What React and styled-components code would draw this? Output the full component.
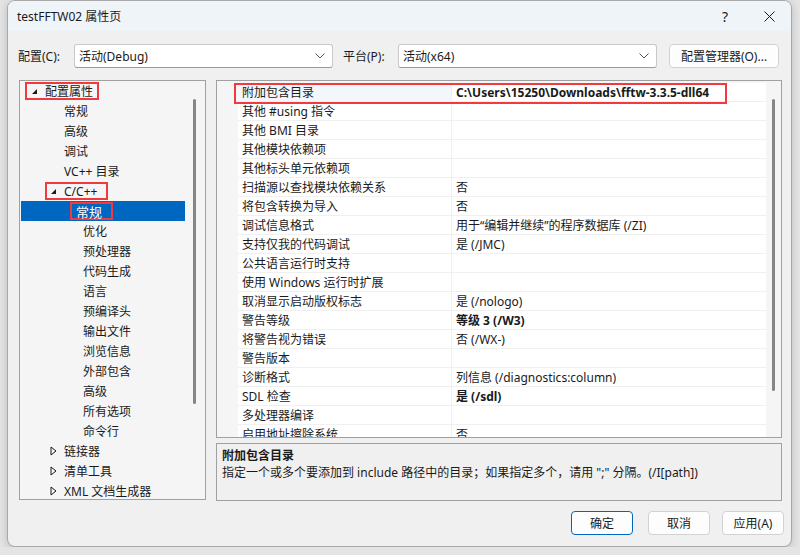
import React from "react";
import styled, { createGlobalStyle } from "styled-components";

const GlobalStyle = createGlobalStyle`
  html, body {
    margin: 0;
    padding: 0;
    background: #e4e4e4;
    font-family: "Noto Sans", "Noto Sans CJK SC", sans-serif;
    font-size: 12px;
    color: #1a1a1a;
  }
`;

const FONT = `"Noto Sans", "Noto Sans CJK SC", sans-serif`;

const Dialog = styled.div`
  margin-left: 7px;
  width: 785px;
  height: 547px;
  box-sizing: border-box;
  border: 1px solid #a8a8a8;
  border-radius: 8px;
  background: #f0f0f0;
  overflow: hidden;
  display: flex;
  flex-direction: column;
  box-shadow: 0 2px 8px rgba(0, 0, 0, 0.18);
`;

const TitleBar = styled.div`
  height: 30px;
  background: #eff4f9;
  display: flex;
  align-items: center;
  padding-left: 9px;
  font-size: 12px;
  flex-shrink: 0;
`;

const TitleText = styled.div`
  flex: 1;
`;

const TitleButton = styled.div`
  width: 44px;
  height: 30px;
  display: flex;
  align-items: center;
  justify-content: center;
  font-size: 14px;
`;

const Toolbar = styled.div`
  display: flex;
  align-items: center;
  height: 25px;
  margin-top: 12px;
  padding-left: 10px;
`;

const Label = styled.span`
  width: ${(p) => p.$w}px;
  white-space: nowrap;
`;

const Combo = styled.div`
  width: 259px;
  height: 24px;
  box-sizing: border-box;
  background: #fff;
  border: 1px solid #c9c9c9;
  border-bottom-color: #9a9a9a;
  border-radius: 3px;
  display: flex;
  align-items: center;
  padding: 0 7px 0 4px;
  margin-right: ${(p) => p.$mr}px;
  span {
    flex: 1;
  }
`;

const Button = styled.button`
  font-family: ${FONT};
  font-size: 12px;
  color: #1a1a1a;
  height: 24px;
  width: ${(p) => p.$w}px;
  margin-left: ${(p) => p.$ml || 0}px;
  background: #fdfdfd;
  border: 1px solid ${(p) => (p.$primary ? "#0067c0" : "#d2d2d2")};
  box-shadow: ${(p) => (p.$primary ? "inset 0 0 0 1px #ffffff" : "none")};
  border-radius: 4px;
  padding: 0;
`;

const Main = styled.div`
  display: flex;
  gap: 10px;
  margin-top: 12px;
  padding-left: 11px;
  height: 421px;
`;

const TreePanel = styled.div`
  position: relative;
  width: 187px;
  height: 420px;
  box-sizing: border-box;
  border: 1px solid #a0a0a0;
  background: #f5f5f5;
  overflow: hidden;
`;

const Thumb = styled.div`
  position: absolute;
  left: ${(p) => p.$x}px;
  top: ${(p) => p.$top}px;
  width: 3px;
  height: ${(p) => p.$h}px;
  border-radius: 2px;
  background: #858585;
`;

const TreeRow = styled.div`
  height: 20px;
  width: 164px;
  margin-left: 1px;
  display: flex;
  align-items: center;
  padding-left: ${(p) => p.$indent}px;
  box-sizing: border-box;
  background: ${(p) => (p.$selected ? "#0067c0" : "transparent")};
  color: ${(p) => (p.$selected ? "#fff" : "#1a1a1a")};
  font-size: ${(p) => (p.$selected ? 13 : 12)}px;
  white-space: nowrap;
`;

const Arrow = styled.span`
  width: 14px;
  display: inline-flex;
  align-items: center;
`;

const Marked = styled.span`
  display: inline-flex;
  align-items: center;
  height: 18px;
  box-sizing: border-box;
  border: 2px solid #f03a3f;
  padding: 0 ${(p) => p.$pr}px 0 ${(p) => p.$pl}px;
  margin-left: ${(p) => -p.$pl - 2}px;
`;

const RightCol = styled.div`
  width: 566px;
  display: flex;
  flex-direction: column;
  gap: 5px;
`;

const Grid = styled.div`
  position: relative;
  height: 358px;
  box-sizing: border-box;
  border: 1px solid #a0a0a0;
  background: #f5f5f5;
  padding-top: 2px;
  overflow: hidden;
`;

const GridRow = styled.div`
  display: grid;
  grid-template-columns: 21px 214px 314px;
  height: 19px;
`;

const Cell = styled.div`
  box-sizing: border-box;
  height: 19px;
  display: flex;
  align-items: center;
  padding-left: 4px;
  background: ${(p) => p.$bg || "#fff"};
  border-bottom: 1px solid #f0f0f0;
  border-right: ${(p) => (p.$sep ? "1px solid #f0f0f0" : "none")};
  font-weight: ${(p) => (p.$bold ? 700 : 400)};
  white-space: nowrap;
  overflow: hidden;
`;

const Gutter = styled.div`
  background: #f5f5f5;
`;

const RedFrame = styled.div`
  position: absolute;
  left: 17px;
  top: 2px;
  width: 493px;
  height: 21px;
  box-sizing: border-box;
  border: 2px solid #f03a3f;
  pointer-events: none;
`;

const Desc = styled.div`
  height: 58px;
  box-sizing: border-box;
  border: 1px solid #a0a0a0;
  background: #f0f0f0;
  padding: 3px 5px;
  line-height: 17px;
`;

const DescTitle = styled.div`
  font-weight: 700;
`;

const Footer = styled.div`
  display: flex;
  justify-content: flex-end;
  padding-right: 7px;
  margin-top: 10px;
`;

const Chevron = () => (
  <svg width="10" height="6" viewBox="0 0 10 6">
    <path d="M0.5 0.5 L5 5 L9.5 0.5" fill="none" stroke="#555" strokeWidth="1" />
  </svg>
);

const Expanded = () => (
  <svg width="7" height="7" viewBox="0 0 7 7">
    <path d="M6 1 L6 6 L1 6 Z" fill="#1a1a1a" />
  </svg>
);

const Collapsed = () => (
  <svg width="7" height="10" viewBox="0 0 7 10">
    <path d="M1 1 L6 5 L1 9 Z" fill="none" stroke="#1a1a1a" strokeWidth="1" />
  </svg>
);

const tree = [
  { label: "配置属性", indent: 10, arrow: "open", mark: [4, 4] },
  { label: "常规", indent: 43 },
  { label: "高级", indent: 43 },
  { label: "调试", indent: 43 },
  { label: "VC++ 目录", indent: 43 },
  { label: "C/C++", indent: 29, arrow: "open", mark: [3, 9] },
  { label: "常规", indent: 55, selected: true, mark: [4, 9] },
  { label: "优化", indent: 62 },
  { label: "预处理器", indent: 62 },
  { label: "代码生成", indent: 62 },
  { label: "语言", indent: 62 },
  { label: "预编译头", indent: 62 },
  { label: "输出文件", indent: 62 },
  { label: "浏览信息", indent: 62 },
  { label: "外部包含", indent: 62 },
  { label: "高级", indent: 62 },
  { label: "所有选项", indent: 62 },
  { label: "命令行", indent: 62 },
  { label: "链接器", indent: 29, arrow: "closed" },
  { label: "清单工具", indent: 29, arrow: "closed" },
  { label: "XML 文档生成器", indent: 29, arrow: "closed" },
];

const props = [
  ["附加包含目录", "C:\\Users\\15250\\Downloads\\fftw-3.3.5-dll64", true],
  ["其他 #using 指令", ""],
  ["其他 BMI 目录", ""],
  ["其他模块依赖项", ""],
  ["其他标头单元依赖项", ""],
  ["扫描源以查找模块依赖关系", "否"],
  ["将包含转换为导入", "否"],
  ["调试信息格式", "用于“编辑并继续”的程序数据库 (/ZI)"],
  ["支持仅我的代码调试", "是 (/JMC)"],
  ["公共语言运行时支持", ""],
  ["使用 Windows 运行时扩展", ""],
  ["取消显示启动版权标志", "是 (/nologo)"],
  ["警告等级", "等级 3 (/W3)", true],
  ["将警告视为错误", "否 (/WX-)"],
  ["警告版本", ""],
  ["诊断格式", "列信息 (/diagnostics:column)"],
  ["SDL 检查", "是 (/sdl)", true],
  ["多处理器编译", ""],
  ["启用地址擦除系统", "否"],
];

function TreeItem({ item }) {
  const arrow =
    item.arrow === "open" ? (
      <Arrow>
        <Expanded />
      </Arrow>
    ) : item.arrow === "closed" ? (
      <Arrow>
        <Collapsed />
      </Arrow>
    ) : null;
  const content = (
    <>
      {arrow}
      <span>{item.label}</span>
    </>
  );
  return (
    <TreeRow $indent={item.indent} $selected={item.selected}>
      {item.mark ? (
        <Marked $pl={item.mark[0]} $pr={item.mark[1]}>
          {content}
        </Marked>
      ) : (
        content
      )}
    </TreeRow>
  );
}

export default function App() {
  return (
    <>
      <GlobalStyle />
      <Dialog>
        <TitleBar>
          <TitleText>testFFTW02 属性页</TitleText>
          <TitleButton>?</TitleButton>
          <TitleButton>
            <svg width="11" height="11" viewBox="0 0 11 11">
              <path d="M0.5 0.5 L10.5 10.5 M10.5 0.5 L0.5 10.5" stroke="#1a1a1a" strokeWidth="1" />
            </svg>
          </TitleButton>
        </TitleBar>

        <Toolbar>
          <Label $w={56}>配置(C):</Label>
          <Combo $mr={10}>
            <span>活动(Debug)</span>
            <Chevron />
          </Combo>
          <Label $w={55}>平台(P):</Label>
          <Combo $mr={12}>
            <span>活动(x64)</span>
            <Chevron />
          </Combo>
          <Button $w={110}>配置管理器(O)...</Button>
        </Toolbar>

        <Main>
          <TreePanel>
            {tree.map((item, i) => (
              <TreeItem key={i} item={item} />
            ))}
            <Thumb $x={173} $top={18} $h={305} />
          </TreePanel>

          <RightCol>
            <Grid>
              {props.map(([name, value, bold], i) => (
                <GridRow key={i}>
                  <Gutter />
                  <Cell $sep $bg={i === 0 ? "#f3f6fa" : "#fff"}>
                    {name}
                  </Cell>
                  <Cell $bold={bold}>{value}</Cell>
                </GridRow>
              ))}
              <Thumb $x={555} $top={18} $h={292} />
              <RedFrame />
            </Grid>
            <Desc>
              <DescTitle>附加包含目录</DescTitle>
              <div>
                指定一个或多个要添加到 include 路径中的目录；如果指定多个，请用 ";" 分隔。(/I[path])
              </div>
            </Desc>
          </RightCol>
        </Main>

        <Footer>
          <Button $w={62} $primary>
            确定
          </Button>
          <Button $w={62} $ml={15}>
            取消
          </Button>
          <Button $w={62} $ml={12}>
            应用(A)
          </Button>
        </Footer>
      </Dialog>
    </>
  );
}
